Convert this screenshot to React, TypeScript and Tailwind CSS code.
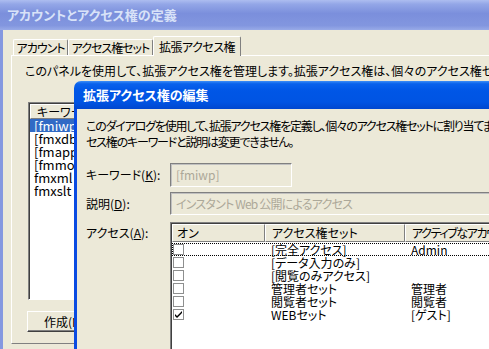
import React from 'react';

const rows = [
  { on: false, set: '[完全アクセス]', account: 'Admin', focus: true },
  { on: false, set: '[データ入力のみ]', account: '' },
  { on: false, set: '[閲覧のみアクセス]', account: '' },
  { on: false, set: '管理者セット', account: '管理者' },
  { on: false, set: '閲覧者セット', account: '閲覧者' },
  { on: true, set: 'WEBセット', account: '[ゲスト]' },
];

const keywords = ['[fmiwp]', '[fmxdbc]', '[fmapp]', '[fmmobile]', 'fmxml', 'fmxslt'];

function Checkbox({ checked }: { checked: boolean }) {
  return (
    <div className="w-[11px] h-[11px] border border-[#8e8f8f] bg-white flex items-center justify-center">
      {checked && (
        <svg width="9" height="9" viewBox="0 0 9 9">
          <path d="M1 4 L3 6 L8 1 L8 3 L3 8 L1 6 Z" fill="#000" />
        </svg>
      )}
    </div>
  );
}

export default function App() {
  return (
    <div className="relative w-[489px] h-[349px] overflow-hidden bg-[#ece9d8] text-[12px] leading-[14px] text-black font-['Noto_Sans_CJK_JP','Noto_Sans_CJK_SC',sans-serif] [font-feature-settings:'palt']">
      {/* Outer window (inactive) */}
      <div className="flex flex-col h-full">
        <div className="h-[30px] shrink-0 flex items-center pl-[7px] text-[13px] font-bold text-[#d8e2f8] bg-[linear-gradient(to_bottom,#adbdf0_0%,#93a6e7_14%,#7b8fdc_45%,#8296df_85%,#98aae7_100%)]">
          アカウントとアクセス権の定義
        </div>
        <div className="flex-1 flex border-l-[3px] border-[#8598e0]">
          <div className="flex-1 flex flex-col pl-[8px]">
            {/* Tabs */}
            <div className="h-[25px] flex items-end pl-[2px]">
              <div className="h-[16px] flex items-center justify-center tracking-[-1px] border-t border-l border-white border-r border-r-[#808080] rounded-t-[2px] whitespace-nowrap w-[55px]">
                アカウント
              </div>
              <div className="h-[16px] flex items-center justify-center tracking-[-1px] border-t border-l border-white border-r border-r-[#808080] rounded-t-[2px] whitespace-nowrap w-[85px]">
                アクセス権セット
              </div>
              <div className="relative z-10 h-[20px] -mb-[1px] flex items-center justify-center tracking-[-0.5px] border-t border-l border-white border-r border-r-[#808080] rounded-t-[2px] bg-[#ece9d8] whitespace-nowrap w-[88px]">
                拡張アクセス権
              </div>
            </div>
            {/* Tab panel */}
            <div className="h-[289px] border-t border-l border-white border-b border-b-[#808080] flex flex-col">
              <div className="pl-[13px] pt-[8px] h-[46px] whitespace-nowrap overflow-hidden">
                このパネルを使用して、拡張アクセス権を管理します。拡張アクセス権は、個々のアクセス権セットに割り当てます。
              </div>
              <div className="ml-[16px] w-[140px] h-[198px] overflow-hidden bg-white border border-t-[#808080] border-l-[#808080] border-r-white border-b-white shadow-[inset_1px_1px_0_#404040]">
                <div className="h-[15px] ml-[1px] mt-[1px] pl-[6px] flex items-center bg-[#ece9d8] border-t border-l border-white border-b border-b-[#808080] whitespace-nowrap">
                  キーワード
                </div>
                <div className="pl-[1px]">
                  {keywords.map((k, i) => (
                    <div
                      key={k}
                      className={
                        i === 0
                          ? 'h-[13px] pl-[4px] flex items-center text-[13px] leading-[13px] whitespace-nowrap bg-[#316ac5] text-white'
                          : 'h-[13px] pl-[4px] flex items-center text-[13px] leading-[13px] whitespace-nowrap'
                      }
                    >
                      {k}
                    </div>
                  ))}
                </div>
              </div>
              <div className="ml-[15px] mt-[11px] w-[120px] h-[21px] pl-[16px] flex items-center whitespace-nowrap border border-t-white border-l-white border-r-[#404040] border-b-[#404040] shadow-[inset_-1px_-1px_0_#808080]">
                作成(N)...
              </div>
            </div>
          </div>
        </div>
      </div>

      {/* Edit dialog (active) */}
      <div className="absolute left-[74px] top-[81px] w-[440px] h-[290px] flex flex-col rounded-tl-[7px] overflow-hidden">
        <div className="h-[28px] shrink-0 flex items-center pl-[9px] text-[13px] font-bold text-white bg-[linear-gradient(to_bottom,#3d8ef7_0%,#0a62ec_10%,#0056e6_35%,#0054e3_75%,#0047cf_100%)]">
          拡張アクセス権の編集
        </div>
        <div className="flex-1 flex flex-col border-l-[3px] border-[#0a4be2] bg-[#ece9d8] pl-[9px]">
          <div className="pt-[9px] whitespace-nowrap leading-[16px] tracking-[-1.2px] overflow-hidden">
            <div>このダイアログを使用して、拡張アクセス権を定義し、個々のアクセス権セットに割り当てます。アク</div>
            <div>セス権のキーワードと説明は変更できません。</div>
          </div>
          <div className="mt-[13px] flex items-center">
            <div className="w-[84px] shrink-0 whitespace-nowrap">
              キーワード(<span className="underline">K</span>):
            </div>
            <div className="w-[122px] h-[24px] pl-[5px] flex items-center text-[#aca899] border border-t-[#808080] border-l-[#808080] border-r-white border-b-white shadow-[inset_1px_1px_0_#c0c0c0]">
              [fmiwp]
            </div>
          </div>
          <div className="mt-[5px] flex items-center">
            <div className="w-[84px] shrink-0 whitespace-nowrap">
              説明(<span className="underline">D</span>):
            </div>
            <div className="flex-1 min-w-0 h-[23px] pl-[5px] flex items-center text-[#aca899] tracking-[-0.8px] whitespace-nowrap border border-t-[#808080] border-l-[#808080] border-r-white border-b-white shadow-[inset_1px_1px_0_#c0c0c0]">
              インスタント Web 公開によるアクセス
            </div>
          </div>
          <div className="mt-[7px] flex items-start">
            <div className="w-[84px] shrink-0 pt-[4px] whitespace-nowrap">
              アクセス(<span className="underline">A</span>):
            </div>
            <div className="flex-1 min-w-0 h-[140px] overflow-hidden bg-white border border-t-[#808080] border-l-[#808080] border-r-white border-b-white shadow-[inset_1px_1px_0_#404040]">
              <div className="flex h-[18px] ml-[1px] mt-[1px] bg-[#ece9d8] whitespace-nowrap">
                <div className="w-[93px] shrink-0 pl-[4px] flex items-center border-t border-l border-white border-r border-r-[#808080] border-b border-b-[#808080]">
                  オン
                </div>
                <div className="w-[140px] shrink-0 pl-[6px] flex items-center border-t border-l border-white border-r border-r-[#808080] border-b border-b-[#808080]">
                  アクセス権セット
                </div>
                <div className="flex-1 pl-[6px] flex items-center tracking-[-1.4px] border-t border-l border-white border-b border-b-[#808080]">
                  アクティブなアカウント
                </div>
              </div>
              <div className="ml-[1px] pt-[1px]">
                {rows.map((r) => (
                  <div
                    key={r.set}
                    className={
                      r.focus
                        ? 'flex items-center h-[13px] leading-[12px] whitespace-nowrap border border-dotted border-black'
                        : 'flex items-center h-[13px] leading-[12px] whitespace-nowrap border border-transparent'
                    }
                  >
                    <div className="w-[92px] shrink-0">
                      <Checkbox checked={r.on} />
                    </div>
                    <div className="w-[140px] shrink-0 pl-[6px]">{r.set}</div>
                    <div className="flex-1 pl-[6px]">{r.account}</div>
                  </div>
                ))}
              </div>
            </div>
          </div>
        </div>
      </div>
    </div>
  );
}
